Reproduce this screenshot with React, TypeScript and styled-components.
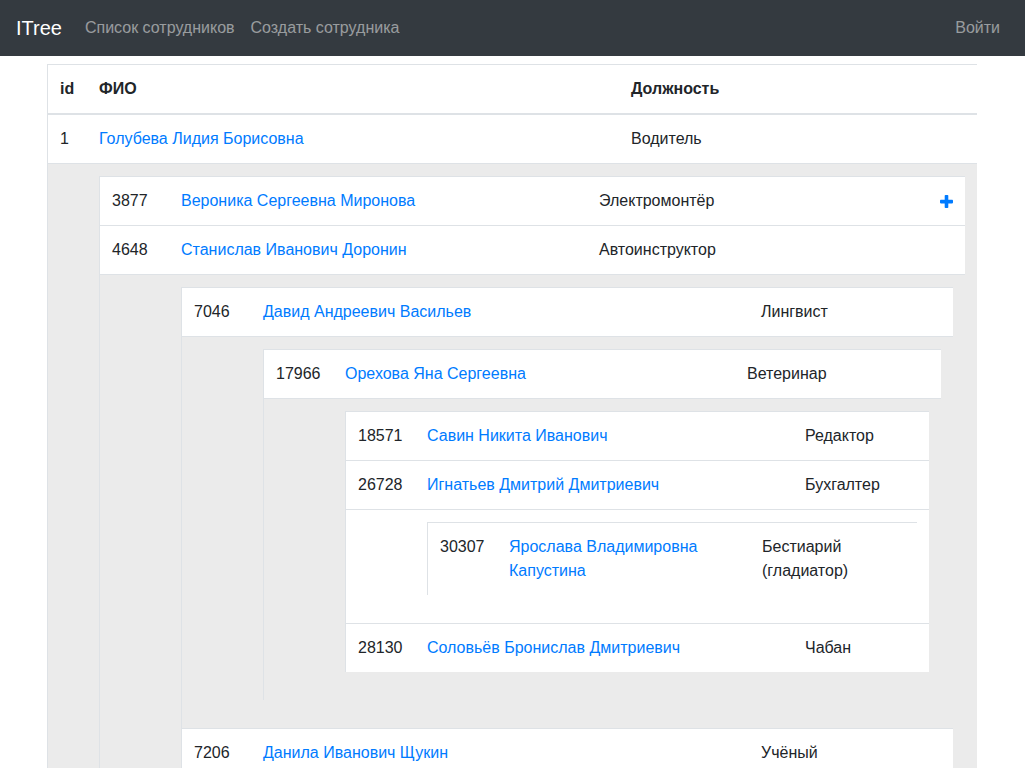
import React from 'react';
import styled, { createGlobalStyle } from 'styled-components';

const GlobalStyle = createGlobalStyle`
  html { scrollbar-width: none; }
  html::-webkit-scrollbar { display: none; }
  html, body { margin: 0; padding: 0; background: #fff; }
  body {
    font-family: "Liberation Sans", Arial, sans-serif;
    font-size: 16px;
    line-height: 1.5;
    color: #212529;
  }
  * { box-sizing: border-box; }
`;

const Navbar = styled.nav`
  display: flex;
  align-items: center;
  height: 56px;
  padding: 8px 17px 8px 16px;
  background: #343a40;
`;

const Brand = styled.a`
  font-size: 20px;
  line-height: 30px;
  padding: 5px 0;
  margin-right: 15px;
  color: #fff;
  text-decoration: none;
`;

const NavList = styled.div`
  display: flex;
  flex: 1;
`;

const NavLink = styled.a<{ $push?: boolean }>`
  padding: 8px;
  line-height: 24px;
  color: rgba(255, 255, 255, 0.5);
  text-decoration: none;
  margin-left: ${(p) => (p.$push ? 'auto' : '0')};
`;

const Container = styled.main`
  max-width: 961px;
  margin: 8px auto 0;
  padding: 0 16px 0 15px;
`;

const Table = styled.div`
  border-left: 1px solid #dee2e6;
  margin-bottom: 16px;
`;

const Row = styled.div<{ $cols: string; $head?: boolean }>`
  display: grid;
  grid-template-columns: ${(p) => p.$cols};
  border-top: 1px solid #dee2e6;
  border-bottom: ${(p) => (p.$head ? '1px solid #dee2e6' : '0')};
  background: #fff;
`;

const Cell = styled.div<{ $bold?: boolean }>`
  padding: 12px;
  min-width: 0;
  font-weight: ${(p) => (p.$bold ? 700 : 400)};
`;

const NameLink = styled.a`
  color: #007bff;
  text-decoration: none;
`;

const NestedRow = styled.div<{ $indent: number; $tone: 'grey' | 'white' }>`
  border-top: 1px solid #dee2e6;
  background: ${(p) => (p.$tone === 'grey' ? '#ebebeb' : '#fff')};
  padding: 12px 12px 12px ${(p) => p.$indent + 12}px;
`;

const PlusIcon = styled.svg`
  display: block;
  width: 13px;
  height: 13px;
  margin-top: 6px;
`;

type Emp = {
  id: number;
  name: string;
  position: string;
  add?: boolean;
  tone?: 'grey' | 'white';
  children?: Emp[];
};

const LEVELS: [number, number, number][] = [
  [39, 532, 334],
  [69, 418, 341],
  [69, 498, 180],
  [69, 402, 170],
  [69, 378, 110],
  [69, 253, 130],
];

const colsFor = (level: number) => {
  const [a, b, c] = LEVELS[Math.min(level, LEVELS.length - 1)];
  return `${a}px ${b}px ${c}px 1fr`;
};

const data: Emp[] = [
  {
    id: 1,
    name: 'Голубева Лидия Борисовна',
    position: 'Водитель',
    tone: 'grey',
    children: [
      { id: 3877, name: 'Вероника Сергеевна Миронова', position: 'Электромонтёр', add: true },
      {
        id: 4648,
        name: 'Станислав Иванович Доронин',
        position: 'Автоинструктор',
        tone: 'grey',
        children: [
          {
            id: 7046,
            name: 'Давид Андреевич Васильев',
            position: 'Лингвист',
            tone: 'grey',
            children: [
              {
                id: 17966,
                name: 'Орехова Яна Сергеевна',
                position: 'Ветеринар',
                tone: 'grey',
                children: [
                  { id: 18571, name: 'Савин Никита Иванович', position: 'Редактор' },
                  {
                    id: 26728,
                    name: 'Игнатьев Дмитрий Дмитриевич',
                    position: 'Бухгалтер',
                    tone: 'white',
                    children: [
                      {
                        id: 30307,
                        name: 'Ярослава Владимировна Капустина',
                        position: 'Бестиарий (гладиатор)',
                      },
                    ],
                  },
                  { id: 28130, name: 'Соловьёв Бронислав Дмитриевич', position: 'Чабан' },
                ],
              },
            ],
          },
          { id: 7206, name: 'Данила Иванович Щукин', position: 'Учёный' },
        ],
      },
    ],
  },
];

const Plus = () => (
  <PlusIcon viewBox="0 0 13 13" aria-hidden="true">
    <rect x="0" y="4.8" width="13" height="3.6" rx="0.8" fill="#007bff" />
    <rect x="4.7" y="0" width="3.6" height="13" rx="0.8" fill="#007bff" />
  </PlusIcon>
);

const EmployeeTable: React.FC<{ items: Emp[]; level: number; head?: boolean }> = ({
  items,
  level,
  head,
}) => {
  const cols = colsFor(level);
  const idWidth = LEVELS[Math.min(level, LEVELS.length - 1)][0];
  return (
    <Table>
      {head && (
        <Row $cols={cols} $head>
          <Cell $bold>id</Cell>
          <Cell $bold>ФИО</Cell>
          <Cell $bold>Должность</Cell>
          <Cell />
        </Row>
      )}
      {items.map((e) => (
        <React.Fragment key={e.id}>
          <Row $cols={cols}>
            <Cell>{e.id}</Cell>
            <Cell>
              <NameLink href="#">{e.name}</NameLink>
            </Cell>
            <Cell>{e.position}</Cell>
            <Cell>{e.add && <Plus />}</Cell>
          </Row>
          {e.children && (
            <NestedRow $indent={idWidth} $tone={e.tone ?? 'grey'}>
              <EmployeeTable items={e.children} level={level + 1} />
            </NestedRow>
          )}
        </React.Fragment>
      ))}
    </Table>
  );
};

export default function App() {
  return (
    <>
      <GlobalStyle />
      <Navbar>
        <Brand href="#">ITree</Brand>
        <NavList>
          <NavLink href="#">Список сотрудников</NavLink>
          <NavLink href="#">Создать сотрудника</NavLink>
          <NavLink href="#" $push>
            Войти
          </NavLink>
        </NavList>
      </Navbar>
      <Container>
        <EmployeeTable items={data} level={0} head />
      </Container>
    </>
  );
}
